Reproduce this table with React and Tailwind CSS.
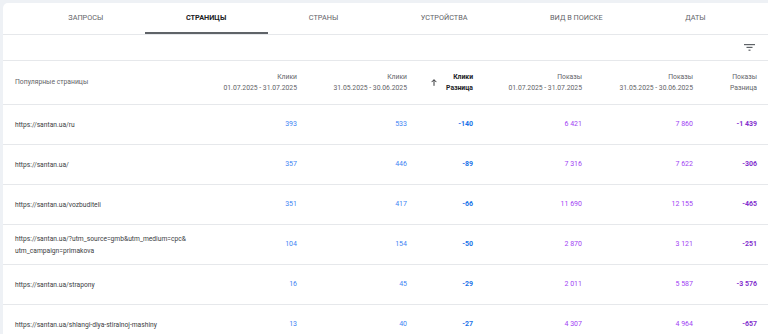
import React from "react";

const tabs = ["Запросы", "Страницы", "Страны", "Устройства", "Вид в поиске", "Даты"];

const rows = [
  { url: ["https://santan.ua/ru"], c1: "393", c2: "533", cd: "-140", p1: "6 421", p2: "7 860", pd: "-1 439" },
  { url: ["https://santan.ua/"], c1: "357", c2: "446", cd: "-89", p1: "7 316", p2: "7 622", pd: "-306" },
  { url: ["https://santan.ua/vozbuditeli"], c1: "351", c2: "417", cd: "-66", p1: "11 690", p2: "12 155", pd: "-465" },
  { url: ["https://santan.ua/?utm_source=gmb&utm_medium=cpc&", "utm_campaign=primakova"], c1: "104", c2: "154", cd: "-50", p1: "2 870", p2: "3 121", pd: "-251" },
  { url: ["https://santan.ua/strapony"], c1: "16", c2: "45", cd: "-29", p1: "2 011", p2: "5 587", pd: "-3 576" },
  { url: ["https://santan.ua/shlangi-dlya-stiralnoj-mashiny"], c1: "13", c2: "40", cd: "-27", p1: "4 307", p2: "4 964", pd: "-657" },
];

const grid = "grid grid-cols-[172px_110px_110px_66px_109px_111px_64px] items-center";

function FilterIcon() {
  return (
    <svg width="11" height="7" viewBox="0 0 11 7" className="block">
      <rect x="0" y="0" width="11" height="1.2" fill="#5f6368" />
      <rect x="2.5" y="2.8" width="6" height="1.2" fill="#5f6368" />
      <rect x="4.5" y="5.6" width="2" height="1.2" fill="#5f6368" />
    </svg>
  );
}

function ArrowUp() {
  return (
    <svg width="6" height="7" viewBox="0 0 6 7" className="block">
      <path d="M3 6.8V0.8M0.6 3.1L3 0.7L5.4 3.1" stroke="#202124" strokeWidth="0.9" fill="none" />
    </svg>
  );
}

export default function App() {
  return (
    <div className="w-[768px] h-[334px] overflow-hidden bg-[#eef1f5] pl-[3px] pt-[3px]" style={{ fontFamily: "Roboto, 'Noto Sans', sans-serif" }}>
      <div className="bg-white rounded-tl-[5px] h-[340px] w-[770px]">
        {/* Tabs */}
        <div className="flex h-[32px] pl-[24px] pr-[26px] border-b border-[#e6e8eb]">
          {tabs.map((t, i) => (
            <div
              key={t}
              className={
                "flex-auto flex items-center justify-center uppercase text-[7.3px] " +
                (i === 1 ? "font-bold text-[#202124] border-b-2 border-[#5f6368] pt-[2px]" : "text-[#5f6368]")
              }
            >
              {t}
            </div>
          ))}
        </div>
        {/* Toolbar */}
        <div className="flex h-[26px] items-center justify-end pr-[18px] border-b border-[#e6e8eb]">
          <FilterIcon />
        </div>
        {/* Header */}
        <div className={grid + " h-[44px] pl-[12px] border-b border-[#e6e8eb] text-[6.8px] leading-[11px] text-[#5f6368]"}>
          <div>Популярные страницы</div>
          <div className="text-right">
            <div>Клики</div>
            <div>01.07.2025 - 31.07.2025</div>
          </div>
          <div className="text-right">
            <div>Клики</div>
            <div>31.05.2025 - 30.06.2025</div>
          </div>
          <div className="flex items-center justify-end gap-[9px] text-[#202124] font-bold">
            <ArrowUp />
            <div className="text-right">
              <div>Клики</div>
              <div>Разница</div>
            </div>
          </div>
          <div className="text-right">
            <div>Показы</div>
            <div>01.07.2025 - 31.07.2025</div>
          </div>
          <div className="text-right">
            <div>Показы</div>
            <div>31.05.2025 - 30.06.2025</div>
          </div>
          <div className="text-right">
            <div>Показы</div>
            <div>Разница</div>
          </div>
        </div>
        {/* Rows */}
        {rows.map((r, i) => (
          <div key={i} className={grid + " h-[40px] pl-[12px] border-b border-[#e6e8eb] text-[7px]"}>
            <div className="text-[#3c4043] text-[6.7px] leading-[12px]">
              {r.url.map((u, j) => (
                <div key={j} className="whitespace-nowrap">{u}</div>
              ))}
            </div>
            <div className="text-right text-[#4285f4]">{r.c1}</div>
            <div className="text-right text-[#4285f4]">{r.c2}</div>
            <div className="text-right text-[#1a73e8] font-bold">{r.cd}</div>
            <div className="text-right text-[#a142f4]">{r.p1}</div>
            <div className="text-right text-[#a142f4]">{r.p2}</div>
            <div className="text-right text-[#8430ce] font-bold">{r.pd}</div>
          </div>
        ))}
      </div>
    </div>
  );
}
